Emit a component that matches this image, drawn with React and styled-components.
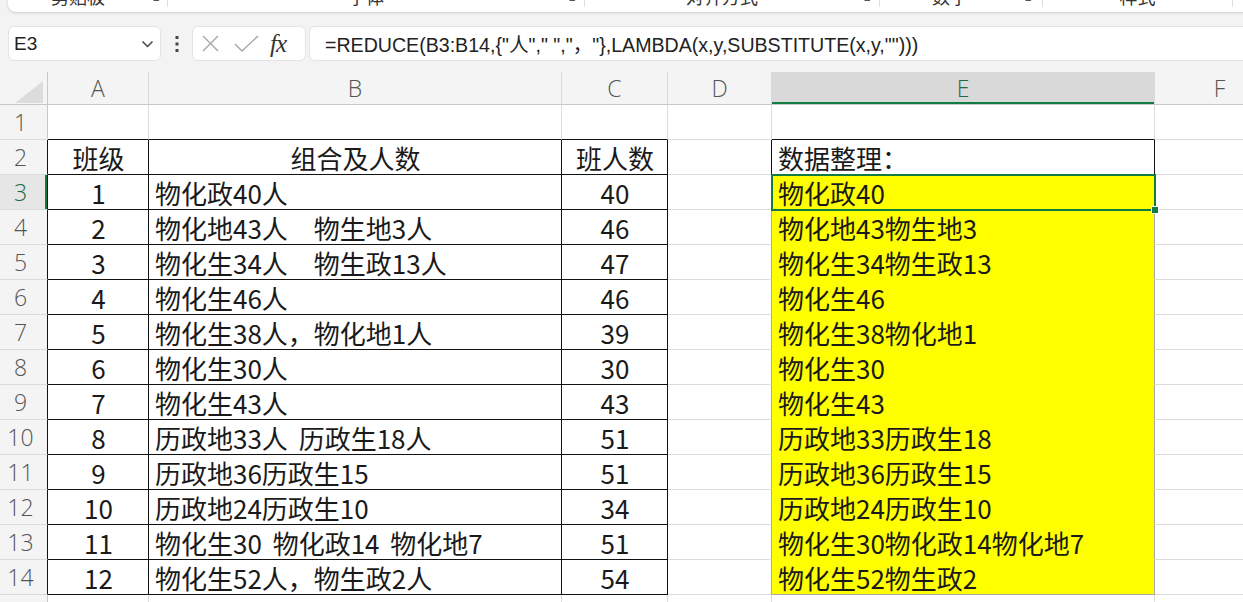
import React from 'react'
import styled, { createGlobalStyle } from 'styled-components'

const GlobalStyle = createGlobalStyle`
  html, body {
    margin: 0;
    padding: 0;
  }
  body {
    background: #f3f3f3;
    overflow: hidden;
    font-family: "Noto Sans CJK SC", sans-serif;
  }
`

const GRID = '#dcdcdc'
const BLACK = '#111'
const EDGE = '#a9a9a9'
const GREEN = '#107c41'
const YELLOW = '#ffff00'

const Page = styled.div`
  width: 1243px;
  height: 602px;
  overflow: hidden;
  display: flex;
  flex-direction: column;

  & > * {
    flex: none;
  }
`

const Ribbon = styled.div`
  box-sizing: border-box;
  height: 40px;
  margin: -28px -30px 0 8px;
  padding-bottom: 5px;
  background: #fff;
  border-radius: 0 0 8px 8px;
  box-shadow: 0 1px 3px rgba(0, 0, 0, 0.16);
  display: flex;
  align-items: flex-end;
`

const Group = styled.div`
  width: ${p => p.$w}px;
  height: 22px;
  display: flex;
  align-items: center;
  border-right: 1px solid #dedede;
  box-sizing: border-box;
`

const GroupLabel = styled.div`
  flex: 1;
  text-align: center;
  font-size: 18px;
  line-height: 20px;
  color: #333;
`

const LauncherIcon = styled.svg`
  width: 12px;
  height: 12px;
  margin-right: ${p => p.$gap}px;
  flex: none;
`

const FormulaBar = styled.div`
  display: flex;
  height: 35px;
  margin: 14px 0 11px 8px;
`

const Box = styled.div`
  box-sizing: border-box;
  background: #fff;
  border: 1px solid #e4e4e4;
  border-radius: 6px;
  display: flex;
  align-items: center;
`

const NameBox = styled(Box)`
  width: 153px;
  padding: 0 6px 0 5px;
  justify-content: space-between;
  font-family: "Liberation Sans", sans-serif;
  font-size: 19px;
  color: #222;
`

const Dots = styled.div`
  width: 31px;
  display: flex;
  align-items: center;
  justify-content: center;
`

const FxBox = styled(Box)`
  width: 114px;
  padding-left: 9px;
`

const FxText = styled.span`
  font-family: "Liberation Serif", serif;
  font-style: italic;
  font-size: 25px;
  color: #333;
  margin-left: 11px;
  letter-spacing: -1px;
`

const FormulaBox = styled(Box)`
  flex: 1;
  margin: 0 -20px 0 3px;
  padding-left: 15px;
  font-family: "Liberation Sans", "Noto Sans CJK SC", sans-serif;
  font-size: 19.6px;
  color: #222;
  white-space: pre;
`

const Sheet = styled.div`
  display: grid;
  grid-template-columns: 48px 101px 413px 106px 104px 383px 130px;
  grid-template-rows: 33px;
  grid-auto-rows: 35px;
  background: #fff;
`

const Corner = styled.div`
  background: #f4f4f4;
  border-bottom: 1px solid #c8c8c8;
  border-right: 1px solid #c8c8c8;
  box-sizing: border-box;
  display: flex;
  align-items: flex-end;
  justify-content: flex-end;
  padding: 0 4px 1px 0;
`

const ColHead = styled.div`
  box-sizing: border-box;
  background: ${p => (p.$active ? '#d9d9d9' : '#f4f4f4')};
  border-right: 1px solid #dadada;
  border-bottom: 1px solid #c8c8c8;
  box-shadow: ${p => (p.$active ? `inset 0 -2px 0 ${GREEN}` : 'none')};
  display: flex;
  align-items: center;
  justify-content: center;
  font-family: "Open Sans", "Noto Sans", sans-serif;
  font-weight: 300;
  font-size: 23px;
  color: ${p => (p.$active ? '#1d6b3f' : '#555')};
`

const RowHead = styled.div`
  box-sizing: border-box;
  background: ${p => (p.$active ? '#e6e6e6' : '#f4f4f4')};
  border-bottom: 1px solid #dadada;
  border-right: 1px solid ${p => p.$edge};
  box-shadow: ${p => (p.$active ? `inset -2px 0 0 ${GREEN}` : 'none')};
  display: flex;
  align-items: center;
  justify-content: center;
  padding-right: 6px;
  font-family: "Open Sans", "Noto Sans", sans-serif;
  font-weight: 300;
  font-size: 23px;
  color: ${p => (p.$active ? '#1d6b3f' : '#555')};
`

const Cell = styled.div`
  box-sizing: border-box;
  position: relative;
  background: ${p => p.$fill || '#fff'};
  border-right: 1px solid ${p => p.$r || GRID};
  border-bottom: 1px solid ${p => p.$b || GRID};
  display: flex;
  align-items: center;
  justify-content: ${p => (p.$center ? 'center' : 'flex-start')};
  padding: 2px 5px 0 6px;
  font-size: 26px;
  line-height: 1;
  word-spacing: 5px;
  color: #1a1a1a;
  white-space: pre;
  ${p =>
    p.$selected &&
    `
    outline: 2px solid ${GREEN};
    outline-offset: -1px;
    z-index: 2;
    &::after {
      content: '';
      position: absolute;
      right: -5px;
      bottom: -5px;
      width: 6px;
      height: 6px;
      background: ${GREEN};
      border: 1px solid #fff;
    }
  `}
`

const rows = [
  [1, '物化政40人', 40, '物化政40'],
  [2, '物化地43人　物生地3人', 46, '物化地43物生地3'],
  [3, '物化生34人　物生政13人', 47, '物化生34物生政13'],
  [4, '物化生46人', 46, '物化生46'],
  [5, '物化生38人，物化地1人', 39, '物化生38物化地1'],
  [6, '物化生30人', 30, '物化生30'],
  [7, '物化生43人', 43, '物化生43'],
  [8, '历政地33人 历政生18人', 51, '历政地33历政生18'],
  [9, '历政地36历政生15', 51, '历政地36历政生15'],
  [10, '历政地24历政生10', 34, '历政地24历政生10'],
  [11, '物化生30 物化政14 物化地7', 51, '物化生30物化政14物化地7'],
  [12, '物化生52人，物生政2人', 54, '物化生52物生政2'],
]

const groups = [
  { label: '剪贴板', w: 160, gap: 7 },
  { label: '字体', w: 417, gap: 8 },
  { label: '对齐方式', w: 295, gap: 8 },
  { label: '数字', w: 163, gap: 10 },
  { label: '样式', w: 190 },
]

function Launcher({ gap }) {
  return (
    <LauncherIcon $gap={gap} viewBox="0 0 12 12" fill="none" stroke="#555" strokeWidth="1.1">
      <path d="M1.5 8V1.5H8" />
      <path d="M4.5 4.5l5.5 5.5" />
      <path d="M10.5 5.5v5h-5" />
    </LauncherIcon>
  )
}

function Chevron() {
  return (
    <svg width="13" height="8" viewBox="0 0 13 8" fill="none" stroke="#444" strokeWidth="1.5">
      <path d="M1.5 1.5l5 5 5-5" />
    </svg>
  )
}

function VDots() {
  return (
    <svg width="4" height="18" viewBox="0 0 4 18" fill="#444">
      <rect x="0.5" y="1" width="3" height="3" />
      <rect x="0.5" y="7.5" width="3" height="3" />
      <rect x="0.5" y="14" width="3" height="3" />
    </svg>
  )
}

function CancelIcon() {
  return (
    <svg width="17" height="17" viewBox="0 0 17 17" fill="none" stroke="#a6a6a6" strokeWidth="1.4">
      <path d="M1 1l15 15M16 1L1 16" />
    </svg>
  )
}

function CheckIcon() {
  return (
    <svg width="25" height="17" viewBox="0 0 25 17" fill="none" stroke="#a6a6a6" strokeWidth="1.4" style={{ marginLeft: 15 }}>
      <path d="M1 9l7 7L24 1" />
    </svg>
  )
}

function CornerTriangle() {
  return (
    <svg width="28" height="22" viewBox="0 0 28 22">
      <polygon points="28,0 28,22 0,22" fill="#dcdcdc" />
    </svg>
  )
}

function cellsFor(r) {
  if (r === 1) {
    return [{ $b: BLACK }, { $b: BLACK }, { $b: BLACK }, {}, { $b: BLACK }, {}]
  }
  if (r === 2) {
    return [
      { $r: BLACK, $b: BLACK, $center: true, text: '班级' },
      { $r: BLACK, $b: BLACK, $center: true, text: '组合及人数' },
      { $r: BLACK, $b: BLACK, $center: true, text: '班人数' },
      { $r: BLACK },
      { $r: BLACK, $b: BLACK, text: '数据整理：' },
      {},
    ]
  }
  if (r <= 14) {
    const [n, combo, count, result] = rows[r - 3]
    return [
      { $r: BLACK, $b: BLACK, $center: true, text: String(n) },
      { $r: BLACK, $b: BLACK, text: combo },
      { $r: BLACK, $b: BLACK, $center: true, text: String(count) },
      { $r: EDGE },
      { $r: EDGE, $b: r === 14 ? EDGE : YELLOW, $fill: YELLOW, $selected: r === 3, text: result },
      {},
    ]
  }
  return [{}, {}, {}, {}, {}, {}]
}

export default function App() {
  const rowNums = Array.from({ length: 15 }, (_, i) => i + 1)
  return (
    <Page>
      <GlobalStyle />
      <Ribbon>
        {groups.map(g => (
          <Group key={g.label} $w={g.w}>
            <GroupLabel>{g.label}</GroupLabel>
            {g.gap !== undefined && <Launcher gap={g.gap} />}
          </Group>
        ))}
      </Ribbon>

      <FormulaBar>
        <NameBox>
          <span>E3</span>
          <Chevron />
        </NameBox>
        <Dots>
          <VDots />
        </Dots>
        <FxBox>
          <CancelIcon />
          <CheckIcon />
          <FxText>fx</FxText>
        </FxBox>
        <FormulaBox>{'=REDUCE(B3:B14,{"人"," ","，"},LAMBDA(x,y,SUBSTITUTE(x,y,"")))'}</FormulaBox>
      </FormulaBar>

      <Sheet>
        <Corner>
          <CornerTriangle />
        </Corner>
        {['A', 'B', 'C', 'D', 'E', 'F'].map(c => (
          <ColHead key={c} $active={c === 'E'}>
            {c}
          </ColHead>
        ))}
        {rowNums.map(r => (
          <React.Fragment key={r}>
            <RowHead $active={r === 3} $edge={r >= 2 && r <= 14 ? BLACK : '#c8c8c8'}>
              {r}
            </RowHead>
            {cellsFor(r).map(({ text, ...props }, i) => (
              <Cell key={i} {...props}>
                {text}
              </Cell>
            ))}
          </React.Fragment>
        ))}
      </Sheet>
    </Page>
  )
}
